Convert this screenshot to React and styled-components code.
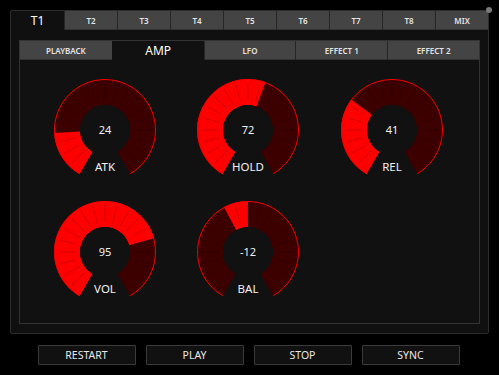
import React from 'react';
import styled, { createGlobalStyle } from 'styled-components';

const GlobalStyle = createGlobalStyle`
  html, body {
    margin: 0;
    background: #000;
  }
  body {
    font-family: "Noto Sans", "Open Sans", "DejaVu Sans", sans-serif;
  }
`;

const Screen = styled.div`
  width: 499px;
  height: 375px;
  box-sizing: border-box;
  padding: 10px 10px 0 10px;
  background: #000;
`;

const Frame = styled.div`
  position: relative;
  width: 479px;
  height: 324px;
  box-sizing: border-box;
  border: 1px solid #2c2c2c;
  border-radius: 2px;
  background: #101010;
  display: flex;
  flex-direction: column;
`;

const CornerDot = styled.span`
  position: absolute;
  top: -4px;
  right: -4px;
  width: 6px;
  height: 6px;
  border-radius: 50%;
  background: #7a7a7a;
`;

const TabRow = styled.div`
  display: grid;
  grid-template-columns: repeat(${p => p.count}, 1fr);
  height: 19px;
  flex: none;
`;

const Tab = styled.div`
  display: flex;
  align-items: center;
  justify-content: center;
  color: ${p => (p.active ? '#fff' : '#e4e4e4')};
  font-size: ${p => (p.active ? '12px' : '8px')};
  font-weight: ${p => (p.active ? 400 : 600)};
  background: ${p => (p.active ? 'transparent' : '#444')};
  border-left: 1px solid ${p => (p.active ? 'transparent' : '#262626')};
  box-shadow: ${p => (p.active ? 'none' : 'inset 0 -1px 0 #333')};
  &:first-child {
    border-left: none;
  }
`;

const Body = styled.div`
  flex: 1;
  padding: 10px 8px 9px 8px;
  display: flex;
`;

const Panel = styled.div`
  flex: 1;
  border: 1px solid #333;
  display: flex;
  flex-direction: column;
  background: #111;
`;

const KnobGrid = styled.div`
  display: grid;
  grid-template-columns: repeat(3, 143.5px);
  grid-auto-rows: 122px;
  padding: 9px 0 0 13px;
`;

const KnobCell = styled.div`
  display: flex;
  justify-content: center;
`;

const Controls = styled.div`
  display: flex;
  justify-content: center;
  gap: 10px;
  padding-top: 11px;
  padding-right: 2px;
`;

const Button = styled.button`
  width: 98px;
  height: 20px;
  box-sizing: border-box;
  border: 1px solid #3a3a3a;
  border-radius: 1px;
  background: #111;
  color: #e8e8e8;
  font-family: inherit;
  font-size: 10.5px;
  padding: 0;
  cursor: pointer;
`;

const polar = (cx, cy, r, a) => {
  const rad = (a * Math.PI) / 180;
  return [cx + r * Math.sin(rad), cy - r * Math.cos(rad)];
};

const sector = (cx, cy, R, r, a0, a1) => {
  const [x0, y0] = polar(cx, cy, R, a0);
  const [x1, y1] = polar(cx, cy, R, a1);
  const [x2, y2] = polar(cx, cy, r, a1);
  const [x3, y3] = polar(cx, cy, r, a0);
  const large = a1 - a0 > 180 ? 1 : 0;
  return `M${x0} ${y0} A${R} ${R} 0 ${large} 1 ${x1} ${y1} L${x2} ${y2} A${r} ${r} 0 ${large} 0 ${x3} ${y3} Z`;
};

const arc = (cx, cy, R, a0, a1) => {
  const [x0, y0] = polar(cx, cy, R, a0);
  const [x1, y1] = polar(cx, cy, R, a1);
  const large = a1 - a0 > 180 ? 1 : 0;
  return `M${x0} ${y0} A${R} ${R} 0 ${large} 1 ${x1} ${y1}`;
};

const Knob = ({ label, value, bipolar }) => {
  const S = 122, c = 61, R = 51, r = 25;
  const start = 210, end = 510;
  let f0, f1;
  if (bipolar) {
    const a = 360 + (value / 64) * 150;
    f0 = Math.min(360, a);
    f1 = Math.max(360, a);
  } else {
    f0 = start;
    f1 = start + (value / 127) * 300;
  }
  const ticks = [];
  for (let a = start + 15; a < end; a += 15) {
    const [x0, y0] = polar(c, c, r + 5, a);
    const [x1, y1] = polar(c, c, R - 4, a);
    ticks.push(<line key={a} x1={x0} y1={y0} x2={x1} y2={y1} stroke="#000" strokeOpacity="0.22" strokeWidth="0.8" />);
  }
  return (
    <svg width={S} height={S} viewBox={`0 0 ${S} ${S}`}>
      <path d={sector(c, c, R, r, start, end)} fill="#3d0000" />
      {f1 > f0 && <path d={sector(c, c, R, r, f0, f1)} fill="#ff0000" />}
      {ticks}
      <path d={arc(c, c, R - 0.5, start, end)} fill="none" stroke="#f00000" strokeWidth="1" />
      <circle cx={c} cy={c} r={r} fill="#111" />
      <text x={c} y={c + 4} textAnchor="middle" fill="#f2f2f2" fontSize="11" fontFamily="Noto Sans, sans-serif">{value}</text>
      <text x={c} y={c + 41} textAnchor="middle" fill="#f2f2f2" fontSize="11.5" fontFamily="Noto Sans, sans-serif">{label}</text>
    </svg>
  );
};

const tracks = ['T1', 'T2', 'T3', 'T4', 'T5', 'T6', 'T7', 'T8', 'MIX'];
const pages = ['PLAYBACK', 'AMP', 'LFO', 'EFFECT 1', 'EFFECT 2'];
const knobs = [
  { label: 'ATK', value: 24 },
  { label: 'HOLD', value: 72 },
  { label: 'REL', value: 41 },
  { label: 'VOL', value: 95 },
  { label: 'BAL', value: -12, bipolar: true },
];

export default function App() {
  return (
    <Screen>
      <GlobalStyle />
      <Frame>
        <CornerDot />
        <TabRow count={tracks.length}>
          {tracks.map(t => (
            <Tab key={t} active={t === 'T1'}>{t}</Tab>
          ))}
        </TabRow>
        <Body>
          <Panel>
            <TabRow count={pages.length}>
              {pages.map(p => (
                <Tab key={p} active={p === 'AMP'}>{p}</Tab>
              ))}
            </TabRow>
            <KnobGrid>
              {knobs.map(k => (
                <KnobCell key={k.label}>
                  <Knob {...k} />
                </KnobCell>
              ))}
            </KnobGrid>
          </Panel>
        </Body>
      </Frame>
      <Controls>
        {['RESTART', 'PLAY', 'STOP', 'SYNC'].map(b => (
          <Button key={b}>{b}</Button>
        ))}
      </Controls>
    </Screen>
  );
}
